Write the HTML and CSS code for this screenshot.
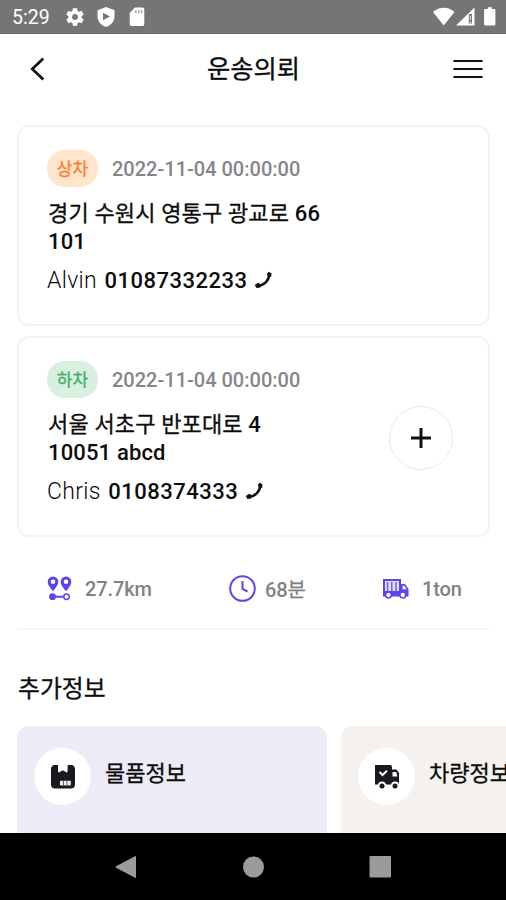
FILE: index.html
```html
<!DOCTYPE html>
<html lang="ko">
<head>
<meta charset="utf-8">
<title>운송의뢰</title>
<link rel="stylesheet" href="styles.css">
</head>
<body>
<div class="screen">
  <div class="status">
    <span class="time">5:29</span>
    <svg class="s-gear" width="22" height="22" viewBox="0 0 24 24"><path fill="#fff" d="M19.14 12.94c.04-.3.06-.61.06-.94 0-.32-.02-.64-.07-.94l2.03-1.58a.49.49 0 0 0 .12-.61l-1.92-3.32a.49.49 0 0 0-.59-.22l-2.39.96c-.5-.38-1.03-.7-1.62-.94l-.36-2.54a.48.48 0 0 0-.48-.41h-3.84a.47.47 0 0 0-.47.41l-.36 2.54c-.59.24-1.13.57-1.62.94l-2.39-.96a.48.48 0 0 0-.59.22L2.74 8.87a.47.47 0 0 0 .12.61l2.03 1.58c-.05.3-.09.63-.09.94s.02.64.07.94l-2.03 1.58a.49.49 0 0 0-.12.61l1.92 3.32c.12.22.37.29.59.22l2.39-.96c.5.38 1.03.7 1.62.94l.36 2.54c.05.24.24.41.48.41h3.84c.24 0 .44-.17.47-.41l.36-2.54c.59-.24 1.13-.56 1.62-.94l2.39.96c.22.08.47 0 .59-.22l1.92-3.32a.47.47 0 0 0-.12-.61zM12 15.2A3.2 3.2 0 1 1 12 8.800a3.200 3.200 0 0 1 0 6.400z"/></svg>
    <svg class="s-shield" width="18" height="20" viewBox="0 0 18 20"><path fill="#fff" d="M9 0l8.500 3.300v6.200c0 4.900-3.500 8.700-8.500 10.500C4 18.200.5 14.400.5 9.500V3.300z"/><path fill="#757575" d="M6 5.800v7.400l7-3.700z"/></svg>
    <svg class="s-sd" width="16" height="20" viewBox="0 0 16 20"><path fill="#fff" d="M6 .5h7.500A1.800 1.800 0 0 1 15.300 2.300v15a1.800 1.800 0 0 1-1.800 1.800h-11A1.800 1.800 0 0 1 .7 17.300V6z"/><path stroke="#a8a8a8" stroke-width="1.500" d="M6.900 3v3.200M9.800 3v3.200M12.600 3v3.200"/></svg>
    <svg class="s-right" width="64" height="20" viewBox="0 0 64 20"><path fill="#fff" d="M0 5C6-.8 15.500-.8 21.500 5L10.700 18.400z"/><path fill="#fff" d="M41.500.5v18H23z"/><path fill="#757575" d="M35.800 7h3.200v9.500h-3.200z"/><path fill="#e0e0e0" d="M36.900 8.500h1.100v4.500h-1.100zM36.900 14.500h1.100V16h-1.100z"/><path fill="#fff" d="M52.300 2h2.500V.2h4V2h2.400c.7 0 1.200.5 1.200 1.200v14.100c0 .7-.5 1.200-1.200 1.200h-8.900c-.7 0-1.200-.5-1.200-1.200V3.200c0-.7.500-1.200 1.200-1.200z"/></svg>
  </div>

  <header class="header">
    <svg width="32" height="28" viewBox="0 0 32 28"><path d="M25.300 3.500L14.300 14l11 10.500" fill="none" stroke="#111" stroke-width="2.700"/></svg>
    <h1>운송의뢰</h1>
    <svg width="30" height="22" viewBox="0 0 30 22"><path d="M.5 3h29M.5 11h29M.5 19h29" stroke="#111" stroke-width="2.200"/></svg>
  </header>

  <main>
    <section class="card">
      <div class="when"><span class="badge load">상차</span><span class="date">2022-11-04 00:00:00</span></div>
      <p class="addr"><span class="ko">경기 수원시 영통구 광교로</span> 66<br>101</p>
      <div class="contact"><span class="name">Alvin</span><b>01087332233</b><svg width="19" height="18" viewBox="0 0 19 18"><path fill="none" stroke="#111" stroke-width="2.600" d="M15.300 3.500C15 9.500 10 14.500 3.500 15"/><path fill="#111" d="M14.800.8l2.800 1.700-.5 3.400-3.600-.6-.5-2.700zM4.200 11.700l2.400 1.300-.3 3.500-3.800.4L.8 14z"/></svg></div>
    </section>

    <section class="card">
      <div class="when"><span class="badge unload">하차</span><span class="date">2022-11-04 00:00:00</span></div>
      <p class="addr"><span class="ko">서울 서초구 반포대로</span> 4<br>10051 abcd</p>
      <div class="contact"><span class="name">Chris</span><b>0108374333</b><svg width="19" height="18" viewBox="0 0 19 18"><path fill="none" stroke="#111" stroke-width="2.600" d="M15.300 3.500C15 9.500 10 14.500 3.500 15"/><path fill="#111" d="M14.800.8l2.800 1.700-.5 3.400-3.600-.6-.5-2.700zM4.200 11.700l2.400 1.300-.3 3.500-3.800.4L.8 14z"/></svg></div>
      <button class="add"><svg width="20" height="20" viewBox="0 0 20 20"><path d="M10 0v20M0 10h20" stroke="#111" stroke-width="3"/></svg></button>
    </section>

    <div class="stats">
      <div class="stat distance">
        <svg width="26" height="26" viewBox="0 0 26 26"><g fill="#5b45ee"><path fill-rule="evenodd" d="M6 .5a5.300 5.300 0 0 1 5.300 5.300C11.300 9.500 8 12.500 6 15.500 4 12.500.7 9.500.7 5.800A5.300 5.300 0 0 1 6 .5zm0 3a2.300 2.300 0 1 0 0 4.600A2.300 2.300 0 0 0 6 3.500zM19 .5a5.300 5.300 0 0 1 5.300 5.300c0 3.700-3.300 6.700-5.300 9.700-2-3-5.300-6-5.300-9.700A5.300 5.300 0 0 1 19 .5zm0 3a2.300 2.300 0 1 0 0 4.600 2.300 2.300 0 0 0 0-4.600z"/><circle cx="5.500" cy="20.700" r="3.400"/></g><path d="M8 20.700h8.500" stroke="#5b45ee" stroke-width="2"/><circle cx="19.500" cy="20.700" r="2.700" fill="#fff" stroke="#5b45ee" stroke-width="1.500"/></svg>
        <span>27.7km</span>
      </div>
      <div class="stat duration">
        <svg width="28" height="28" viewBox="0 0 28 28"><circle cx="13.500" cy="13.500" r="12.300" fill="none" stroke="#5b45ee" stroke-width="2"/><path d="M13.500 6v7.800l5 2.700" fill="none" stroke="#5b45ee" stroke-width="2"/></svg>
        <span>68<span class="ko">분</span></span>
      </div>
      <div class="stat weight">
        <svg width="28" height="22" viewBox="0 0 28 22"><path fill="#5b45ee" d="M1 1h18v5h4l3.500 5v7.500H1z"/><path fill="#e2dffc" d="M3 3h14v10H3z"/><path stroke="#6f5cf0" stroke-width="1.500" d="M5.500 4v9M9.800 4v9M14 4v9"/><path fill="#fff" d="M20.500 7.800h2l2.200 3.400h-4.200z"/><circle cx="6.500" cy="17" r="2.900" fill="#fff" stroke="#5b45ee" stroke-width="1.500"/><circle cx="20.800" cy="17" r="2.900" fill="#fff" stroke="#5b45ee" stroke-width="1.500"/></svg>
        <span>1ton</span>
      </div>
    </div>

    <h2>추가정보</h2>
    <div class="extras">
      <div class="extra goods">
        <span class="disc"><svg width="26" height="26" viewBox="0 0 26 26"><path fill="#181a20" d="M4.500 1H8v5.800c0 1.500 1 2 2 1.200l1.300-1c1-.8 2-.8 3 0l1.300 1c1 .8 2 .3 2-1.200V1h3.900C23.500 1 25 2.800 25 5v15.500c0 2.700-1.500 4.100-4.200 4.100H5.200C2.500 24.600 1 23.200 1 20.500V5c0-2.200 1.500-4 3.500-4z"/><path fill="#eee" d="M10 16.800h10.800v4.600H10z"/><path stroke="#666" d="M13.500 17v4M17 17v4"/></svg></span>
        <span>물품정보</span>
      </div>
      <div class="extra vehicle">
        <span class="disc"><svg width="26" height="26" viewBox="0 0 26 26"><path fill="#181a20" d="M1 1h15a2 2 0 0 1 2 2v2.500h4.500L25 9v11.500H1z"/><path d="M5.500 8l3 3 4.500-4.200" fill="none" stroke="#fff" stroke-width="2"/><path fill="#fff" d="M18.500 8h3.800l1 4.500h-4.800z"/><circle cx="8" cy="21.500" r="4" fill="#fff"/><circle cx="21" cy="21.500" r="4" fill="#fff"/><circle cx="8" cy="22" r="2.500" fill="#181a20"/><circle cx="21" cy="22" r="2.500" fill="#181a20"/></svg></span>
        <span>차량정보</span>
      </div>
    </div>
  </main>

  <nav class="nav">
    <svg width="22" height="24" viewBox="0 0 22 24"><path fill="#9b9b9b" d="M20 1.200Q21 .7 21 1.800v20.400q0 1.100-1 .6L1 12.700q-1-.7 0-1.400z"/></svg>
    <svg width="22" height="22" viewBox="0 0 22 22"><circle cx="11.500" cy="11" r="10.500" fill="#9b9b9b"/></svg>
    <svg width="22" height="22" viewBox="0 0 22 22"><rect x=".5" width="21.500" height="21.500" rx="1" fill="#9b9b9b"/></svg>
  </nav>
</div>
</body>
</html>
```

FILE: styles.css
```css
* { box-sizing: border-box; }

body {
  margin: 0;
  background: #fff;
  color: #0c0c0c;
  font-family: Roboto, "Noto Sans CJK KR", sans-serif;
}

h1, h2, p { margin: 0; }
svg { display: block; flex: none; }
.ko { font-weight: 400; }
h1, h2, .ko, .badge, .extra { -webkit-text-stroke: .3px currentColor; }

.screen {
  width: 506px;
  height: 900px;
  display: flex;
  flex-direction: column;
  overflow: hidden;
}

.status {
  height: 34px;
  flex: none;
  display: flex;
  align-items: center;
  background: #757575;
  color: #fff;
  padding: 0 9px 0 12px;
  border-bottom: 1px solid #6a6a6a;
}
.time { font-size: 19.500px; width: 52px; line-height: 34px; padding-top: 2px; }
.s-shield { margin-left: 11px; }
.s-sd { margin-left: 14px; }
.s-right { margin-left: auto; }

.header {
  height: 70px;
  flex: none;
  display: flex;
  align-items: center;
  justify-content: space-between;
  padding: 0 23px 0 18px;
}
h1 { font-size: 25.300px; font-weight: 400; line-height: 36px; padding: 2px 0 0 4px; }

main {
  flex: 1;
  min-height: 0;
  overflow: hidden;
  padding: 21px 0 0 17px;
}

.card {
  position: relative;
  width: 473px;
  height: 201px;
  border: 2px solid #f3f3f4;
  border-radius: 12px;
  padding: 23px 28px;
  margin-bottom: 10px;
}
.when { display: flex; align-items: center; gap: 14px; height: 37px; }
.badge {
  width: 51px;
  height: 37px;
  border-radius: 18px;
  font-size: 17px;
  font-weight: 400;
  line-height: 38px;
  text-align: center;
}
.load { background: #ffe5cc; color: #ff7a2a; }
.unload { background: #d9efdf; color: #43ae6a; }
.date { font-size: 20px; font-weight: 500; color: #84868b; }
.addr { font-size: 22px; font-weight: 500; line-height: 28px; margin-top: 13px; padding-left: 1px; letter-spacing: .15px; }
.contact { display: flex; align-items: center; height: 30px; margin-top: 9px; font-size: 23px; }
.name { font-weight: 300; margin-right: 7.500px; letter-spacing: .3px; }
.contact b { font-size: 22px; font-weight: 500; letter-spacing: .5px; }
.contact svg { margin-left: 7px; }
.add {
  position: absolute;
  right: 35px;
  top: 68px;
  width: 64px;
  height: 64px;
  border: 1px solid #e8eaec;
  border-radius: 50%;
  background: #fff;
  padding: 0;
  display: grid;
  place-items: center;
}

.stats {
  display: flex;
  width: 473px;
  height: 83px;
  border-bottom: 2px solid #f5f5f6;
  padding: 2px 0 0 30px;
  color: #7f8185;
  font-size: 20px;
  font-weight: 500;
  letter-spacing: -.1px;
}
.stat { display: flex; align-items: center; }
.distance { width: 182px; gap: 12px; }
.duration { width: 153px; gap: 8px; }
.weight { gap: 12px; }

h2 { font-size: 23.800px; font-weight: 400; line-height: 36px; margin-top: 41px; padding-left: 1px; }

.extras { display: flex; gap: 14px; margin-top: 19px; }
.extra {
  flex: none;
  width: 310px;
  height: 140px;
  border-radius: 12px;
  padding: 22px 17px;
  display: flex;
  align-items: flex-start;
  gap: 14px;
  font-size: 22px;
  font-weight: 400;
  line-height: 52px;
}
.goods { background: #edebf6; }
.vehicle { background: #f4f1ee; }
.disc {
  width: 57px;
  height: 57px;
  border-radius: 50%;
  background: #fff;
  display: grid;
  place-items: center;
}

.nav {
  height: 67px;
  flex: none;
  background: #000;
  display: flex;
  align-items: center;
  justify-content: space-between;
  padding: 0 115px;
}
```
